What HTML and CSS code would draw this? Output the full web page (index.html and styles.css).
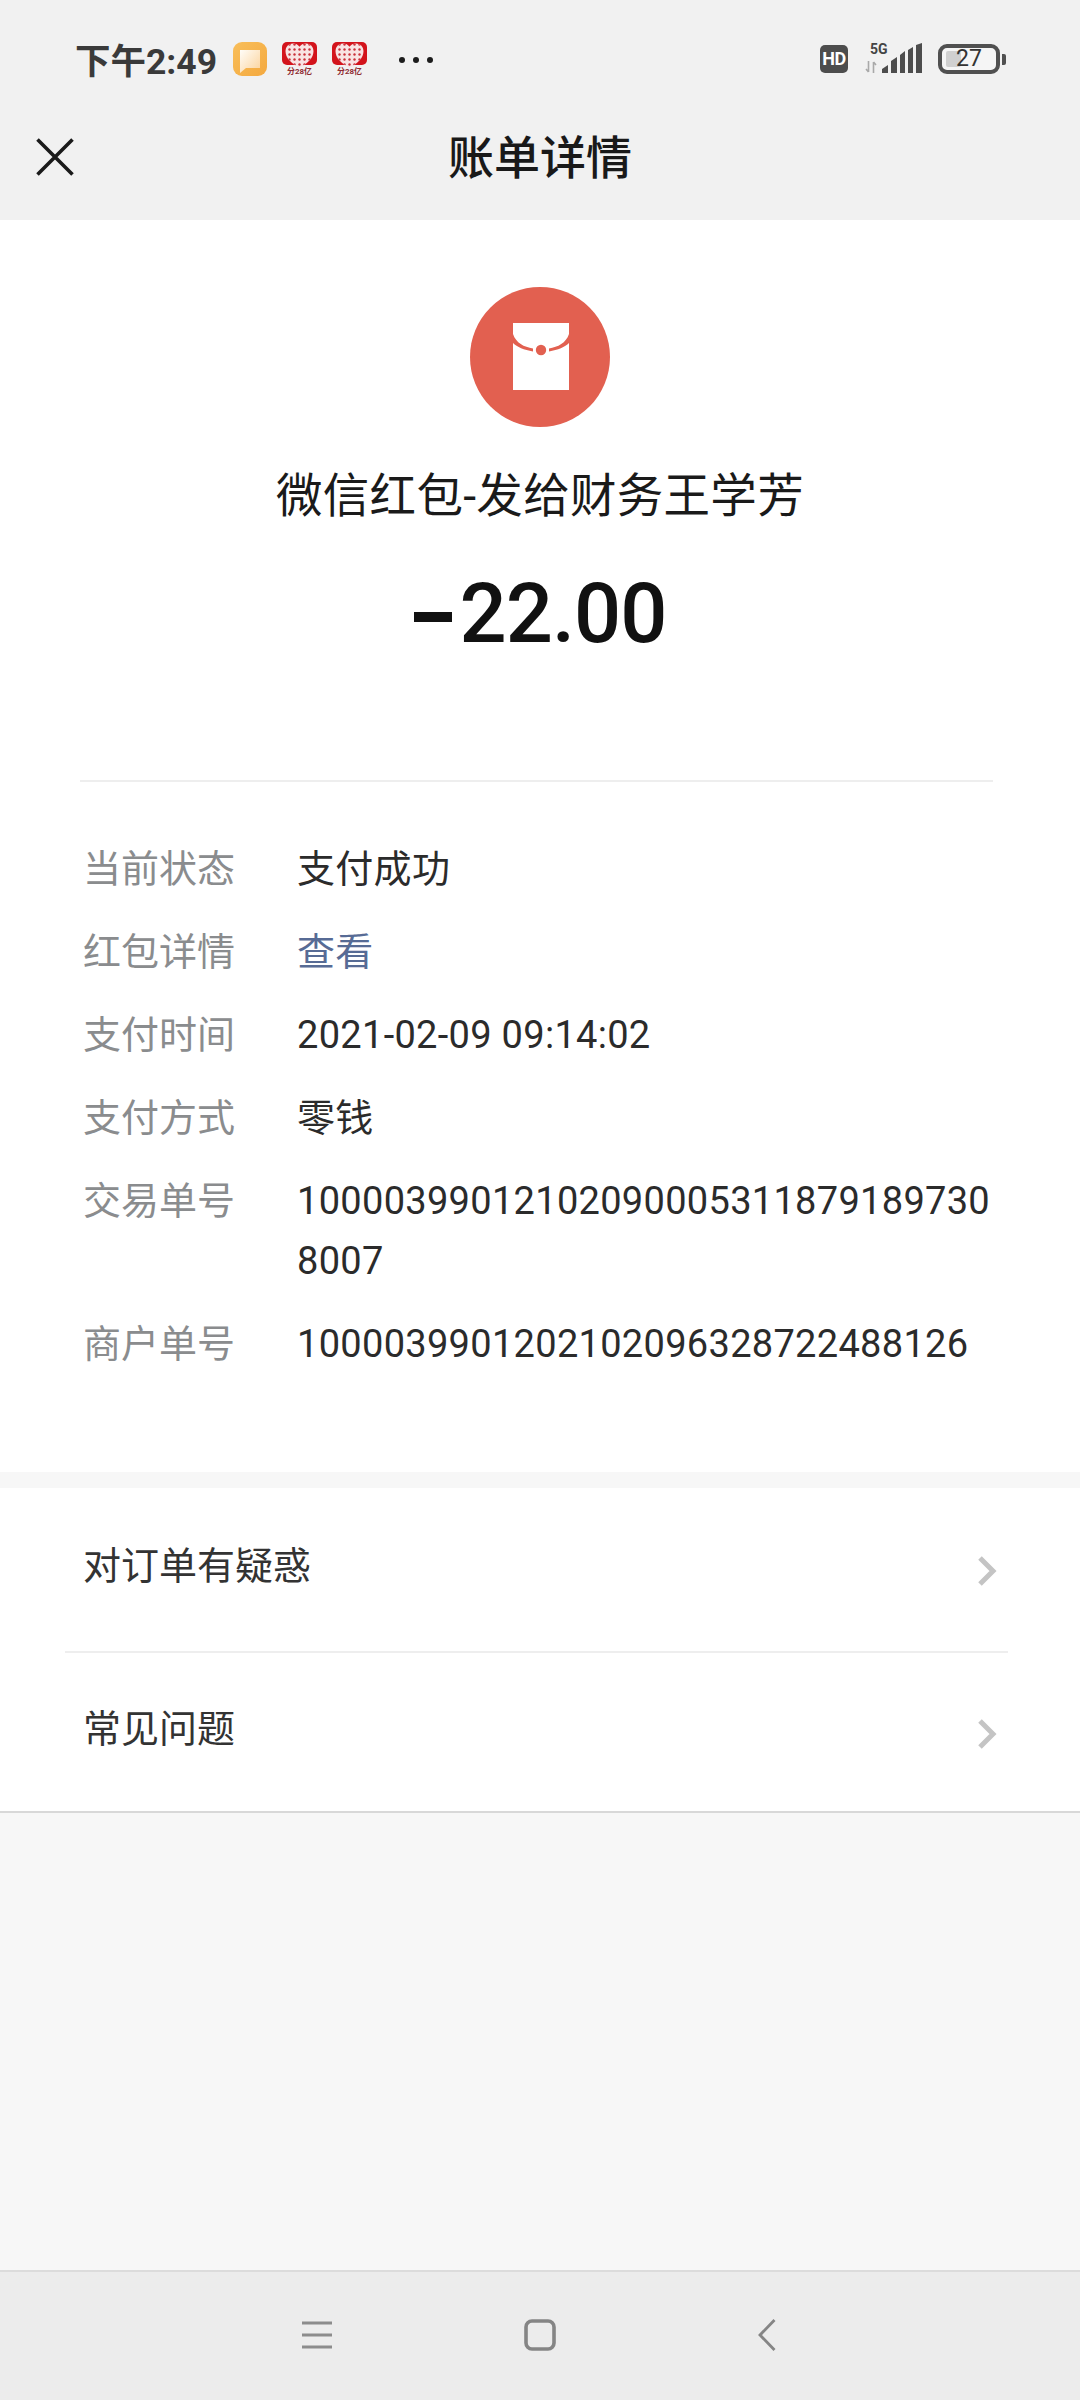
FILE: index.html
```html
<!DOCTYPE html>
<html lang="zh-CN">
<head>
<meta charset="utf-8">
<title>账单详情</title>
<link rel="stylesheet" href="styles.css">
</head>
<body>
<div class="page">
  <svg class="defs" width="0" height="0">
    <defs>
      <linearGradient id="msgBg" x1="0" y1="0" x2="1" y2="1"><stop offset="0" stop-color="#f8be5a"/><stop offset="1" stop-color="#f4a93f"/></linearGradient>
      <linearGradient id="msgBubble" x1="0" y1="0" x2="1" y2="1"><stop offset="0" stop-color="#fffdf8"/><stop offset="1" stop-color="#fbd29a"/></linearGradient>
      <pattern id="heartDots" width="5" height="5" patternUnits="userSpaceOnUse"><circle cx="2.500" cy="2.500" r="1.200" fill="#c9303a"/></pattern>
      <symbol id="pddHeart" viewBox="0 0 35 26">
        <rect width="35" height="23" rx="5" fill="#d3141c"/>
        <path d="M17.500 26C9 21 3.500 16 3.500 9 3.500 4.500 7 1.500 11 1.500c2.700 0 5.200 1.200 6.500 3.300C18.800 2.700 21.300 1.500 24 1.500c4 0 7.500 3 7.500 7.500 0 7-5.500 12-14 17z" fill="#f8e3e3"/>
        <path d="M17.500 26C9 21 3.500 16 3.500 9 3.500 4.500 7 1.500 11 1.500c2.700 0 5.200 1.200 6.500 3.300C18.800 2.700 21.300 1.500 24 1.500c4 0 7.500 3 7.500 7.500 0 7-5.500 12-14 17z" fill="url(#heartDots)"/>
      </symbol>
    </defs>
  </svg>
  <header class="top">
    <div class="status">
      <span class="time">下午2:49</span>
      <svg class="ico-msg" viewBox="0 0 34 34"><rect width="34" height="34" rx="9" fill="url(#msgBg)"/><path d="M7 8h20v18H13l-6 5z" fill="url(#msgBubble)"/></svg>
      <span class="pdd"><svg viewBox="0 0 35 26"><use href="#pddHeart"/></svg><span class="pdd-t">分28亿</span></span>
      <span class="pdd"><svg viewBox="0 0 35 26"><use href="#pddHeart"/></svg><span class="pdd-t">分28亿</span></span>
      <span class="dots"><i></i><i></i><i></i></span>
      <span class="grow"></span>
      <span class="hd">HD</span>
      <span class="net">
        <span class="net-5g">5G</span>
        <svg class="net-arrows" viewBox="0 0 12 12"><path d="M3.500 0v11M3.500 11L1 8M8.500 12V1M8.500 1L11 4" fill="none" stroke="#a9a9a9" stroke-width="1.600"/></svg>
        <svg class="net-bars" viewBox="0 0 40 30"><path d="M0 30v-4l6-4v8zM9 30V18l6-4v16zM18 30V12l5-4v22zM26 30V7l5-3v26zM34 30V2l6-2v30z" fill="#4d4d4d"/></svg>
      </span>
      <span class="batt"><span class="batt-fill"></span><span class="batt-num">27</span></span>
      <span class="batt-nub"></span>
    </div>
    <div class="nav">
      <svg class="close" viewBox="0 0 38 38"><path d="M1.500 1.500l35 35M36.500 1.500l-35 35" fill="none" stroke="#1a1a1a" stroke-width="3.600"/></svg>
      <h1 class="title">账单详情</h1>
    </div>
  </header>

  <section class="summary">
    <svg class="hongbao" viewBox="0 0 140 140"><circle cx="70" cy="70" r="70" fill="#e26050"/><rect x="43" y="36" width="56" height="67" fill="#fff"/><path d="M43 47C46 56 54 60 63 61.500V64.500C54 63 47 60 43 56ZM99 47C96 56 88 60 79 61.500V64.500C88 63 95 60 99 56Z" fill="#e26050"/><circle cx="71" cy="63" r="8" fill="#fff"/><circle cx="71" cy="63" r="5.200" fill="#e26050"/></svg>
    <p class="merchant">微信红包-发给财务王学芳</p>
    <p class="amount"><span class="minus"></span>22.00</p>
  </section>

  <dl class="details">
    <div class="row"><dt>当前状态</dt><dd>支付成功</dd></div>
    <div class="row"><dt>红包详情</dt><dd class="link">查看</dd></div>
    <div class="row"><dt>支付时间</dt><dd>2021-02-09 09:14:02</dd></div>
    <div class="row"><dt>支付方式</dt><dd>零钱</dd></div>
    <div class="row"><dt>交易单号</dt><dd>100003990121020900053118791897308007</dd></div>
    <div class="row"><dt>商户单号</dt><dd>1000039901202102096328722488126</dd></div>
  </dl>

  <div class="band"></div>

  <ul class="menu">
    <li class="item"><span>对订单有疑惑</span><svg class="chev" viewBox="0 0 20 30"><path d="M3 2l13 13L3 28" fill="none" stroke="#c4c4c4" stroke-width="5"/></svg></li>
    <li class="item"><span>常见问题</span><svg class="chev" viewBox="0 0 20 30"><path d="M3 2l13 13L3 28" fill="none" stroke="#c4c4c4" stroke-width="5"/></svg></li>
  </ul>

  <div class="fill"></div>

  <nav class="softkeys">
    <svg class="key-menu" viewBox="0 0 30 28"><path d="M0 2h30M0 14h30M0 26h30" stroke="#8c8c8c" stroke-width="3" fill="none"/></svg>
    <svg class="key-home" viewBox="0 0 32 32"><rect x="2" y="2" width="28" height="28" rx="6" fill="none" stroke="#858585" stroke-width="3.600"/></svg>
    <svg class="key-back" viewBox="0 0 18 32"><path d="M16.500 1L2 16l14.500 15" fill="none" stroke="#858585" stroke-width="2.800"/></svg>
  </nav>
</div>
</body>
</html>
```
FILE: styles.css
```css
* { box-sizing: border-box; margin: 0; padding: 0; }
html, body { width: 1080px; height: 2400px; }
body { font-family: Roboto, "Noto Sans CJK SC", sans-serif; background: #f7f7f7; color: #222; }
.page { display: flex; flex-direction: column; height: 2400px; background: #f7f7f7; }
.defs { position: absolute; }

.top { height: 220px; background: #f1f1f1; }
.status { display: flex; align-items: flex-start; height: 108px; padding: 42px 74px 0 75px; }
.time { font-size: 35.500px; line-height: 36px; font-weight: 700; color: #3a3a3a; margin-top: 2px; width: 158px; white-space: nowrap; }
.ico-msg { width: 34px; height: 34px; }
.pdd { display: flex; flex-direction: column; align-items: center; width: 35px; height: 34px; margin-left: 15px; }
.pdd svg { display: block; width: 35px; height: 26px; flex: none; }
.pdd-t { font-size: 8px; line-height: 8px; font-weight: 700; color: #8e2a30; white-space: nowrap; }
.dots { display: flex; gap: 8px; margin: 15px 0 0 32px; }
.dots i { width: 6px; height: 6px; border-radius: 50%; background: #1c1c1c; }
.grow { flex: 1; }
.hd { width: 28px; height: 28px; margin-top: 3px; border-radius: 5px; background: #4d4d4d; color: #fff; font-size: 18px; line-height: 28px; font-weight: 700; text-align: center; letter-spacing: -0.5px; }
.net { display: grid; grid-template-columns: 17px 40px; grid-template-rows: 18px 12px; width: 57px; height: 31px; margin: 1px 0 0 17px; }
.net-5g { grid-column: 1 / 3; grid-row: 1; padding-left: 5px; font-size: 14px; line-height: 12px; font-weight: 700; color: #444; }
.net-arrows { grid-column: 1; grid-row: 2; width: 12px; height: 12px; }
.net-bars { grid-column: 2; grid-row: 1 / 3; width: 40px; height: 30px; }
.batt { display: flex; align-items: center; justify-content: center; position: relative; width: 62px; height: 30px; margin: 2px 0 0 16px; border: 4px solid #505050; border-radius: 9px; overflow: hidden; background: #f5f5f5; }
.batt-fill { position: absolute; left: 4px; top: 3px; bottom: 3px; width: 15px; background: #d0d0d0; border-radius: 2px; }
.batt-num { position: relative; font-size: 23px; line-height: 22px; color: #333; }
.batt-nub { width: 4px; height: 11px; margin: 12px 0 0 2px; border-radius: 0 2px 2px 0; background: #505050; }

.nav { display: flex; align-items: center; justify-content: center; position: relative; height: 112px; padding-bottom: 13px; }
.close { position: absolute; left: 36px; top: 30px; width: 38px; height: 38px; }
.title { font-size: 46px; line-height: 60px; font-weight: 500; color: #191919; }

.summary { display: flex; flex-direction: column; align-items: center; height: 560px; padding: 67px 0 0; background: #fff; }
.hongbao { width: 140px; height: 140px; }
.merchant { margin-top: 37px; font-size: 46.500px; line-height: 64px; color: #1a1a1a; white-space: nowrap; letter-spacing: 0.300px; }
.amount { display: flex; align-items: center; margin-top: 36px; font-size: 83px; line-height: 100px; font-weight: 500; color: #111; letter-spacing: -1px; }
.minus { width: 38px; height: 10px; margin: 6px 8px 0 0; background: #111; }

.details { background: #fff; position: relative; height: 692px; padding: 59px 0 0 83px; }
.details::before { content: ""; position: absolute; left: 80px; right: 87px; top: 0; height: 2px; background: #eeeeee; }
.row { display: flex; margin-bottom: 23px; font-size: 38px; line-height: 60px; }
.row dt { width: 214px; flex: none; color: #8a8c8e; }
.row dd { width: 705px; color: #2b2b2b; word-break: break-all; letter-spacing: 0.300px; }
.row dd.link { color: #576b95; }

.band { height: 16px; background: #f7f7f7; }
.menu { list-style: none; height: 325px; background: #fff; border-bottom: 2px solid #d8d8d8; }
.item { display: flex; align-items: center; justify-content: space-between; margin: 0 72px 0 65px; padding: 0 11px 0 18px; height: 165px; font-size: 38px; color: #333; border-bottom: 2px solid #eeeeee; }
.item span { margin-top: -14px; }
.item + .item { border-bottom: 0; height: 158px; }
.chev { width: 20px; height: 30px; margin-top: 3px; }

.fill { flex: 1; background: #f7f7f7; }
.softkeys { display: flex; align-items: center; height: 130px; padding: 0 0 3px 302px; border-top: 2px solid #dcdcdc; background: #ececec; }
.key-menu { width: 30px; height: 28px; margin-right: 192px; }
.key-home { width: 32px; height: 32px; margin-right: 202px; }
.key-back { width: 18px; height: 32px; }
```
